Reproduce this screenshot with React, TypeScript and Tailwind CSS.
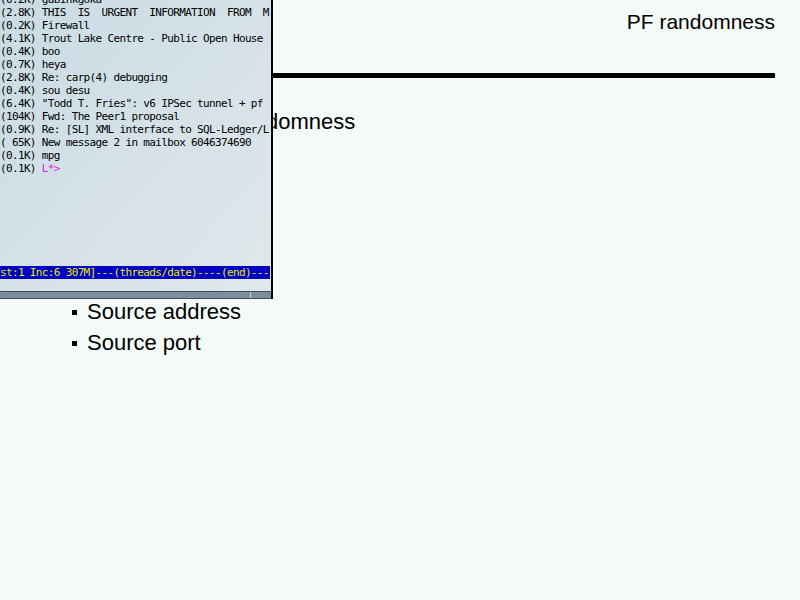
import React from 'react';

const mailLines: string[] = [
  '(0.2K) gabinkgoka',
  '(2.8K) THIS  IS  URGENT  INFORMATION  FROM  M',
  '(0.2K) Firewall',
  '(4.1K) Trout Lake Centre - Public Open House',
  '(0.4K) boo',
  '(0.7K) heya',
  '(2.8K) Re: carp(4) debugging',
  '(0.4K) sou desu',
  '(6.4K) "Todd T. Fries": v6 IPSec tunnel + pf',
  '(104K) Fwd: The Peer1 proposal',
  '(0.9K) Re: [SL] XML interface to SQL-Ledger/L',
  '( 65K) New message 2 in mailbox 6046374690',
  '(0.1K) mpg',
];

const Terminal: React.FC = () => {
  return (
    <div className="absolute left-0 top-0 w-[273px] h-[299px] flex flex-col border-r-2 border-black bg-linear-to-br from-[#c9dbe4] to-[#e1e8eb] overflow-hidden font-['DejaVu_Sans_Mono',monospace] text-[11px] tracking-[-0.65px] text-black">
      {/* mutt index */}
      <div className="flex flex-col mt-[-7px]">
        {mailLines.map((line) => (
          <div key={line} className="h-[13px] leading-[13px] whitespace-pre">
            {line}
          </div>
        ))}
        <div className="h-[13px] leading-[13px] whitespace-pre">
          (0.1K) <span className="text-[#e01ee0]">L*&gt;</span>
        </div>
      </div>
      <div className="flex-1" />
      {/* status bar */}
      <div className="h-[13px] leading-[13px] whitespace-pre bg-[#0000c4] text-[#e8e800] mr-px">
        st:1 Inc:6 307M]---(threads/date)----(end)---
      </div>
      <div className="h-[12px]" />
      {/* scroll bar */}
      <div className="h-[8px] flex border-y border-[#3e4e58] bg-[#7b909c]">
        <div className="w-[251px] border-r border-[#c5d3da]" />
        <div className="flex-1" />
      </div>
    </div>
  );
};

const App: React.FC = () => {
  return (
    <div className="relative w-[800px] h-[600px] bg-[#f4faf7] overflow-hidden font-['Liberation_Sans',sans-serif] text-black">
      <div className="flex flex-col">
        {/* slide title */}
        <div className="pt-[8px] pr-[25px] text-right text-[21px] leading-[28px]">
          PF randomness
        </div>
        {/* rule */}
        <div className="mt-[37px] ml-[25px] mr-[25px] h-[5px] bg-black" />
        {/* heading */}
        <div className="mt-[29px] pl-[200px] text-[22px] leading-[30px]">
          PF randomness
        </div>
        {/* bullets */}
        <ul className="mt-[159px] pl-[72px] flex flex-col text-[22px] leading-[31px]">
          <li className="flex items-center">
            <span className="w-[5px] h-[5px] bg-black mr-[10px] mt-[2px]" />
            Source address
          </li>
          <li className="flex items-center">
            <span className="w-[5px] h-[5px] bg-black mr-[10px] mt-[2px]" />
            Source port
          </li>
        </ul>
      </div>
      <Terminal />
    </div>
  );
};

export default App;
